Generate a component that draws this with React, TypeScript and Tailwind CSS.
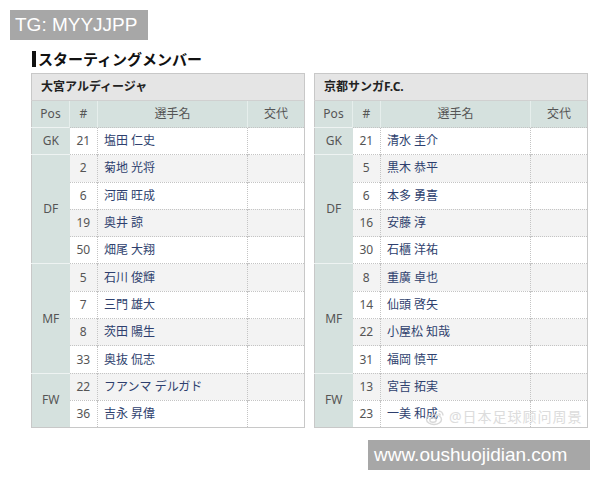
import React from "react";

type Player = { no: number; name: string };
type Group = { pos: string; players: Player[] };
type Team = { name: string; groups: Group[] };

const teams: Team[] = [
  {
    name: "大宮アルディージャ",
    groups: [
      { pos: "GK", players: [{ no: 21, name: "塩田 仁史" }] },
      {
        pos: "DF",
        players: [
          { no: 2, name: "菊地 光将" },
          { no: 6, name: "河面 旺成" },
          { no: 19, name: "奥井 諒" },
          { no: 50, name: "畑尾 大翔" },
        ],
      },
      {
        pos: "MF",
        players: [
          { no: 5, name: "石川 俊輝" },
          { no: 7, name: "三門 雄大" },
          { no: 8, name: "茨田 陽生" },
          { no: 33, name: "奥抜 侃志" },
        ],
      },
      {
        pos: "FW",
        players: [
          { no: 22, name: "フアンマ デルガド" },
          { no: 36, name: "吉永 昇偉" },
        ],
      },
    ],
  },
  {
    name: "京都サンガF.C.",
    groups: [
      { pos: "GK", players: [{ no: 21, name: "清水 圭介" }] },
      {
        pos: "DF",
        players: [
          { no: 5, name: "黒木 恭平" },
          { no: 6, name: "本多 勇喜" },
          { no: 16, name: "安藤 淳" },
          { no: 30, name: "石櫃 洋祐" },
        ],
      },
      {
        pos: "MF",
        players: [
          { no: 8, name: "重廣 卓也" },
          { no: 14, name: "仙頭 啓矢" },
          { no: 22, name: "小屋松 知哉" },
          { no: 31, name: "福岡 慎平" },
        ],
      },
      {
        pos: "FW",
        players: [
          { no: 13, name: "宮吉 拓実" },
          { no: 23, name: "一美 和成" },
        ],
      },
    ],
  },
];

const LineupTable = ({ team }: { team: Team }) => {
  let rowIndex = 0;
  return (
    <table className="w-[274px] table-fixed border-collapse border border-[#c8c8c8] text-[12px] text-[#555]">
      <colgroup>
        <col className="w-[38px]" />
        <col className="w-[28px]" />
        <col className="w-[150px]" />
        <col />
      </colgroup>
      <thead>
        <tr>
          <th
            colSpan={4}
            className="h-[27px] bg-[#e5e5e5] pl-[9px] text-left font-bold text-[#222] border-b border-[#d0d0d0]"
          >
            {team.name}
          </th>
        </tr>
        <tr className="h-[27px] bg-[#d5e1de]">
          <th className="font-normal border-r border-[#e6eeec]">Pos</th>
          <th className="font-normal border-r border-[#e6eeec]">#</th>
          <th className="font-normal border-r border-[#e6eeec]">選手名</th>
          <th className="font-normal">交代</th>
        </tr>
      </thead>
      <tbody>
        {team.groups.map((g) =>
          g.players.map((p, i) => {
            const even = rowIndex++ % 2 === 0;
            const bg = even ? "bg-white" : "bg-[#f3f3f3]";
            return (
              <tr key={g.pos + p.no} className="h-[27.3px]">
                {i === 0 && (
                  <td
                    rowSpan={g.players.length}
                    className="bg-[#d5e1de] text-center border-t border-[#eef3f2]"
                  >
                    {g.pos}
                  </td>
                )}
                <td className={`${bg} text-center border-t border-dotted border-[#c4c4c4]`}>
                  {p.no}
                </td>
                <td
                  className={`${bg} pl-[6px] whitespace-nowrap text-[#2e3f6e] border-t border-l border-dotted border-[#c4c4c4]`}
                >
                  {p.name}
                </td>
                <td className={`${bg} border-t border-l border-dotted border-[#c4c4c4]`}></td>
              </tr>
            );
          })
        )}
      </tbody>
    </table>
  );
};

const App = () => {
  return (
    <div
      className="relative w-[600px] h-[480px] bg-white overflow-hidden"
      style={{ fontFamily: '"Noto Sans", "Noto Sans CJK JP", sans-serif' }}
    >
      <div className="pt-[10px] pl-[10px]">
        <div
          className="w-[138px] h-[30px] bg-[#a7a7a7] pl-[5px] text-[19px] leading-[30px] text-white"
          style={{ fontFamily: '"Liberation Sans", sans-serif' }}
        >
          TG: MYYJJPP
        </div>
      </div>

      <div className="mt-[10px] ml-[32px] flex h-[18px] items-center">
        <div className="h-[16px] w-[4px] bg-[#111]" />
        <div className="ml-[2px] text-[15px] font-bold leading-[18px] text-[#111]">
          スターティングメンバー
        </div>
      </div>

      <div className="mt-[5px] ml-[31px] flex items-start gap-[9px]">
        {teams.map((t) => (
          <LineupTable key={t.name} team={t} />
        ))}
      </div>

      <div className="absolute left-[425px] top-[406px] flex items-center gap-[4px] text-[14px] text-[#d4d4d4] opacity-80">
        <svg width="20" height="18" viewBox="0 0 20 18" fill="none" stroke="#cfcfcf" strokeWidth="1.4">
          <ellipse cx="9" cy="11.5" rx="7.5" ry="5" />
          <ellipse cx="8" cy="12" rx="3.2" ry="2.3" />
          <path d="M13.5 3a4.5 4.5 0 0 1 4.5 4.5" />
          <path d="M13.5 5.8a1.8 1.8 0 0 1 1.8 1.8" />
        </svg>
        <span className="tracking-[1px]">@日本足球顾问周景</span>
      </div>

      <div className="mt-[12px] ml-[368px] w-[222px] h-[30px]">
        <div
          className="h-[30px] bg-[#a7a7a7] pl-[6px] text-[19px] leading-[30px] text-white"
          style={{ fontFamily: '"Liberation Sans", sans-serif' }}
        >
          www.oushuojidian.com
        </div>
      </div>
    </div>
  );
};

export default App;
